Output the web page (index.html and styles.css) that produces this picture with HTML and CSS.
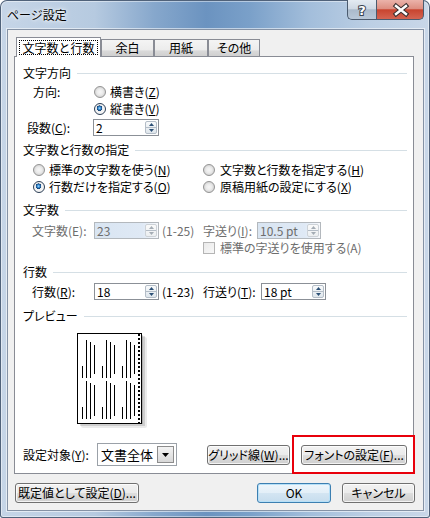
FILE: index.html
```html
<!DOCTYPE html>
<html lang="ja">
<head>
<meta charset="utf-8">
<title>ページ設定</title>
<link rel="stylesheet" href="styles.css">
</head>
<body>
<div class="window">
  <div class="titlebar">
    <div class="title">ページ設定</div>
    <div class="caption">
      <div class="cap-help"><svg width="28" height="19" viewBox="0 0 28 19"><text x="14" y="15" text-anchor="middle" class="cap-glyph">?</text></svg></div>
      <div class="cap-close"><svg width="47" height="19" viewBox="0 0 47 19"><path d="M19 6 L29 14 M29 6 L19 14" stroke="#3a3030" stroke-width="4.6" stroke-linecap="square" fill="none"/><path d="M19 6 L29 14 M29 6 L19 14" stroke="#fff" stroke-width="2.4" stroke-linecap="square" fill="none"/></svg></div>
    </div>
  </div>
  <div class="client">
    <div class="tabs">
      <div class="tab active"><span class="focus">文字数と行数</span></div>
      <div class="tab t2">余白</div>
      <div class="tab t3">用紙</div>
      <div class="tab t4">その他</div>
    </div>
    <div class="panel">
      <div class="head h1"><span>文字方向</span><i></i></div>
      <div class="row r-dir">
        <span class="lbl w61">方向:</span>
        <span class="radio"></span><span>横書き(<u>Z</u>)</span>
      </div>
      <div class="row r-dir2">
        <span class="radio on"></span><span>縦書き(<u>V</u>)</span>
      </div>
      <div class="row r-cols">
        <span class="lbl w66">段数(<u>C</u>):</span>
        <div class="spin w66"><span class="val">2</span><div class="spinbtn"><span><svg width="5" height="3" viewBox="0 0 5 3"><path d="M0 3 L2.5 0 L5 3Z" class="arr"/></svg></span><span><svg width="5" height="3" viewBox="0 0 5 3"><path d="M0 0 L5 0 L2.5 3Z" class="arr"/></svg></span></div></div>
      </div>

      <div class="head h2"><span>文字数と行数の指定</span><i></i></div>
      <div class="row r-std">
        <div class="col1"><span class="radio"></span><span>標準の文字数を使う(<u>N</u>)</span></div>
        <div class="col2"><span class="radio"></span><span>文字数と行数を指定する(<u>H</u>)</span></div>
      </div>
      <div class="row r-lines">
        <div class="col1"><span class="radio on"></span><span>行数だけを指定する(<u>O</u>)</span></div>
        <div class="col2"><span class="radio"></span><span>原稿用紙の設定にする(<u>X</u>)</span></div>
      </div>

      <div class="head h3"><span>文字数</span><i></i></div>
      <div class="row r-chars dis">
        <span class="lbl w62">文字数(E):</span>
        <div class="spin w65 off"><span class="val">23</span><div class="spinbtn"><span><svg width="5" height="3" viewBox="0 0 5 3"><path d="M0 3 L2.5 0 L5 3Z" class="arr"/></svg></span><span><svg width="5" height="3" viewBox="0 0 5 3"><path d="M0 0 L5 0 L2.5 3Z" class="arr"/></svg></span></div></div>
        <span class="range">(1-25)</span>
        <span class="lbl w54">字送り(<u>I</u>):</span>
        <div class="spin w64 off"><span class="val">10.5 pt</span><div class="spinbtn"><span><svg width="5" height="3" viewBox="0 0 5 3"><path d="M0 3 L2.5 0 L5 3Z" class="arr"/></svg></span><span><svg width="5" height="3" viewBox="0 0 5 3"><path d="M0 0 L5 0 L2.5 3Z" class="arr"/></svg></span></div></div>
      </div>
      <div class="row r-check dis">
        <span class="check"></span><span>標準の字送りを使用する(A)</span>
      </div>

      <div class="head h4"><span>行数</span><i></i></div>
      <div class="row r-rows">
        <span class="lbl w62">行数(<u>R</u>):</span>
        <div class="spin w65"><span class="val">18</span><div class="spinbtn"><span><svg width="5" height="3" viewBox="0 0 5 3"><path d="M0 3 L2.5 0 L5 3Z" class="arr"/></svg></span><span><svg width="5" height="3" viewBox="0 0 5 3"><path d="M0 0 L5 0 L2.5 3Z" class="arr"/></svg></span></div></div>
        <span class="range">(1-23)</span>
        <span class="lbl w58">行送り(<u>T</u>):</span>
        <div class="spin w65"><span class="val">18 pt</span><div class="spinbtn"><span><svg width="5" height="3" viewBox="0 0 5 3"><path d="M0 3 L2.5 0 L5 3Z" class="arr"/></svg></span><span><svg width="5" height="3" viewBox="0 0 5 3"><path d="M0 0 L5 0 L2.5 3Z" class="arr"/></svg></span></div></div>
      </div>

      <div class="head h5"><span>プレビュー</span><i></i></div>
      <svg class="preview" width="72" height="96" viewBox="0 0 72 96">
        <rect x="4" y="4" width="66" height="91" rx="2" fill="#000" opacity="0.08"/>
        <rect x="3" y="3" width="65" height="90" fill="#000" opacity="0.12"/>
        <rect x="2" y="2" width="64" height="89" fill="#000" opacity="0.15"/>
        <rect x="0.5" y="0.5" width="64" height="90" fill="#fff" stroke="#000"/>
        <line x1="62" y1="1" x2="62" y2="90" stroke="#000" stroke-width="2" stroke-dasharray="2 2"/>
        <g stroke="#000" stroke-width="1" fill="none">
          <path d="M5.5 33V45M9.5 7V45M13.5 9V45M17.5 12V41M5.5 74V86M9.5 48V86M13.5 50V86M17.5 52V83"/>
          <path d="M25.5 33V45M29.5 7V45M33.5 9V45M37.5 12V41M25.5 74V86M29.5 48V86M33.5 50V86M37.5 52V83"/>
          <path d="M45.5 33V45M49.5 7V45M53.5 9V45M57.5 12V41M45.5 74V86M49.5 48V86M53.5 50V86M57.5 52V83"/>
        </g>
      </svg>

      <div class="row r-target">
        <span class="lbl w74">設定対象(<u>Y</u>):</span>
        <div class="combo"><span class="cval">文書全体</span><span class="cbtn"><svg width="7" height="4" viewBox="0 0 7 4"><path d="M0 0 L7 0 L3.5 4Z" fill="#000"/></svg></span></div>
        <div class="btn b-grid">グリッド線(<u>W</u>)...</div>
        <div class="btn b-font">フォントの設定(<u>F</u>)...</div>
      </div>
    </div>
    <div class="footer">
      <div class="btn b-default">既定値として設定(<u>D</u>)...</div>
      <div class="btn b-ok">OK</div>
      <div class="btn b-cancel">キャンセル</div>
    </div>
  </div>
  <div class="annot"></div>
</div>
</body>
</html>
```

FILE: styles.css
```css
* { box-sizing: border-box; }
html, body { margin: 0; padding: 0; }
body {
  width: 430px;
  height: 518px;
  overflow: hidden;
  font-family: "Noto Sans CJK JP", "Noto Sans", sans-serif;
  font-size: 12px;
  font-feature-settings: "palt" 1;
  color: #000;
  background: #fff;
}
u { text-decoration: underline; text-underline-offset: 1px; }

.window {
  width: 430px;
  height: 518px;
  position: relative;
  overflow: hidden;
  border-radius: 7px 7px 3px 3px;
  background: linear-gradient(90deg, #c6d5e7 0%, #b6cae0 22%, #86a7cc 36%, #6b93c0 48%, #7aa0c9 58%, #a3bedb 72%, #bccfe4 86%, #c9d7e8 100%);
  box-shadow: inset 0 0 0 1px #50627a, inset 0 0 0 2px rgba(255,255,255,0.45);
}

.titlebar {
  height: 29px;
  display: flex;
  justify-content: space-between;
  align-items: flex-start;
}
.title {
  padding: 7px 0 0 7px;
  line-height: 16px;
  font-size: 12px;
  font-feature-settings: normal;
  text-shadow: 0 0 6px #fff, 0 0 3px #fff;
}
.caption { display: flex; margin-right: 6px; }
.cap-help {
  width: 29px;
  height: 20px;
  border: 1px solid #4b5b6e;
  border-top: none;
  border-right: none;
  border-radius: 0 0 0 5px;
  background: linear-gradient(#e4ebf2 0%, #cfd9e4 45%, #aabacb 52%, #b9c8d8 100%);
}
.cap-glyph {
  font-family: "DejaVu Sans", sans-serif;
  font-weight: bold;
  font-size: 13px;
  fill: #fff;
  stroke: #3a4450;
  stroke-width: 2px;
  paint-order: stroke;
}
.cap-close {
  width: 48px;
  height: 20px;
  border: 1px solid #4b5b6e;
  border-top: none;
  border-radius: 0 0 5px 0;
  background: linear-gradient(#ebb3aa 0%, #dd8f82 45%, #c8442f 52%, #d46452 100%);
}

.client {
  margin-left: 7px;
  width: 417px;
  height: 482px;
  border: 1px solid #8592a5;
  background: #f0f0f0;
  padding: 0 7px 0 6px;
  box-shadow: 0 0 0 1px rgba(255,255,255,0.55);
}

.tabs {
  margin: 7px 0 0 2px;
  height: 19px;
  display: flex;
  align-items: flex-end;
}
.tab {
  height: 17px;
  border: 1px solid #898c95;
  border-bottom: none;
  background: linear-gradient(#f4f4f4 0%, #ececec 62%, #d9d9d9 68%, #d0d0d0 100%);
  text-align: center;
  line-height: 16px;
}
.tab.active {
  position: relative;
  z-index: 1;
  height: 20px;
  margin-bottom: -1px;
  width: 85px;
  background: #fff;
  padding-top: 2px;
}
.focus {
  display: inline-block;
  border: 1px dotted #000;
  line-height: 12px;
  height: 15px;
  width: 79px;
  padding-top: 1px;
  font-feature-settings: normal;
}
.t2 { width: 53px; }
.t3 { width: 54px; }
.t4 { width: 52px; }

.panel {
  width: 400px;
  height: 418px;
  border: 1px solid #898c95;
  background: #fff;
  padding: 0 6px 0 8px;
}

.head {
  display: flex;
  align-items: center;
  height: 16px;
  line-height: 16px;
}
.head i {
  flex: 1;
  height: 1px;
  background: #d5dfe5;
  margin-left: 6px;
}
.h1 { margin-top: 8px; }
.h2 { margin-top: 6px; }
.h3 { margin-top: 7px; }
.h4 { margin-top: 8px; }
.h5 { margin-top: 8px; }

.row {
  display: flex;
  align-items: center;
  height: 16px;
  line-height: 16px;
  white-space: nowrap;
}
.lbl { flex: none; display: block; }
.w54 { width: 54px; }
.w58 { width: 58px; }
.w61 { width: 61px; }
.w62 { width: 62px; }
.w66 { width: 66px; }
.w74 { width: 74px; }

.r-dir { margin-top: 3px; padding-left: 10px; }
.r-dir2 { margin-top: 1px; padding-left: 71px; }
.r-cols { margin-top: 2px; padding-left: 4px; height: 17px; }
.r-std { margin-top: 4px; }
.r-lines { margin-top: 1px; }
.r-chars { margin-top: 4px; padding-left: 9px; height: 17px; }
.r-check { margin-top: 1px; padding-left: 180px; }
.r-rows { margin-top: 3px; padding-left: 9px; height: 17px; }
.r-target { margin-top: 14px; height: 23px; }

.col1 { width: 180px; padding-left: 10px; display: flex; align-items: center; }
.col2 { display: flex; align-items: center; }
.col2 .radio { margin-right: 5px; }

.dis { color: #6d6d6d; }
.range { width: 44px; padding-left: 3px; flex: none; }

.radio {
  flex: none;
  width: 12px;
  height: 12px;
  border-radius: 50%;
  border: 1px solid #939393;
  margin-right: 4px;
  background: radial-gradient(circle closest-side, #f6f6f6 0%, #ececec 55%, #d6d6d6 100%);
}
.radio.on {
  border-color: #2c3e55;
  background: radial-gradient(circle closest-side at 45% 42%, #a9dcfb 0%, #3d92d6 30%, #1c5c9c 50%, #16406e 62%, #e9ecef 70%, #f4f4f4 100%);
}
.check {
  flex: none;
  width: 12px;
  height: 12px;
  border: 1px solid #b5b5b5;
  background: linear-gradient(135deg, #eaeaea, #f8f8f8);
  margin-right: 5px;
}

.spin {
  flex: none;
  display: flex;
  height: 17px;
  border: 1px solid #8b9097;
  background: #fff;
}
.spin.w66 { width: 66px; }
.spin.w65 { width: 65px; }
.spin.w64 { width: 64px; }
.spin .val { flex: 1; padding-left: 2px; line-height: 15px; }
.spin.off {
  border-color: #b3b8bd;
  background: linear-gradient(90deg, #d9e5f2 0%, #dfe9f5 75%, #f7f9fc 100%);
  color: #6d6d6d;
}
.spinbtn {
  width: 12px;
  margin: 1px 1px 1px 0;
  display: flex;
  flex-direction: column;
  border: 1px solid #b4bdc7;
  border-radius: 2px;
  background: linear-gradient(#f8fafb, #dfe6ec);
}
.spinbtn span {
  flex: 1;
  display: flex;
  align-items: center;
  justify-content: center;
}
.spinbtn span + span { border-top: 1px solid #b4bdc7; }
.spinbtn svg { display: block; }
.arr { fill: #2c4f75; }
.off .arr { fill: #a4acb4; }
.off .spinbtn { border-color: #cdd2d7; background: linear-gradient(#fafafa, #eceff1); }

.preview {
  display: block;
  margin: 9px 0 0 54px;
}

.combo {
  flex: none;
  width: 80px;
  height: 23px;
  border: 1px solid #9ba1a8;
  background: #fff;
  display: flex;
  align-items: center;
  padding: 2px;
}
.cval { flex: 1; font-size: 13px; line-height: 17px; padding-left: 1px; }
.cbtn {
  width: 17px;
  height: 17px;
  border: 1px solid #8d8d8d;
  background: linear-gradient(#f3f3f3, #d8d8d8);
  display: flex;
  align-items: center;
  justify-content: center;
}
.cbtn svg { display: block; }

.btn {
  flex: none;
  height: 20px;
  border: 1px solid #707070;
  border-radius: 3px;
  background: linear-gradient(#f2f2f2 0%, #ebebeb 48%, #dddddd 52%, #cfcfcf 100%);
  box-shadow: inset 0 0 0 1px rgba(255,255,255,0.75);
  text-align: center;
  line-height: 18px;
  white-space: nowrap;
}
.b-grid { width: 83px; margin-left: 30px; }
.b-font { width: 106px; margin-left: 11px; }

.footer {
  display: flex;
  margin-top: 9px;
  padding-left: 1px;
}
.b-default { width: 124px; }
.b-ok {
  width: 74px;
  margin-left: 118px;
  border-color: #3c7fb1;
  box-shadow: inset 0 0 0 1px #b6e0f8;
  background: linear-gradient(#eef6fb 0%, #e3eff8 48%, #d3e5f2 52%, #c6ddee 100%);
}
.b-cancel { width: 73px; margin-left: 11px; }

.annot {
  position: absolute;
  left: 292px;
  top: 435px;
  width: 123px;
  height: 39px;
  border: 2px solid #e8000b;
}
```
